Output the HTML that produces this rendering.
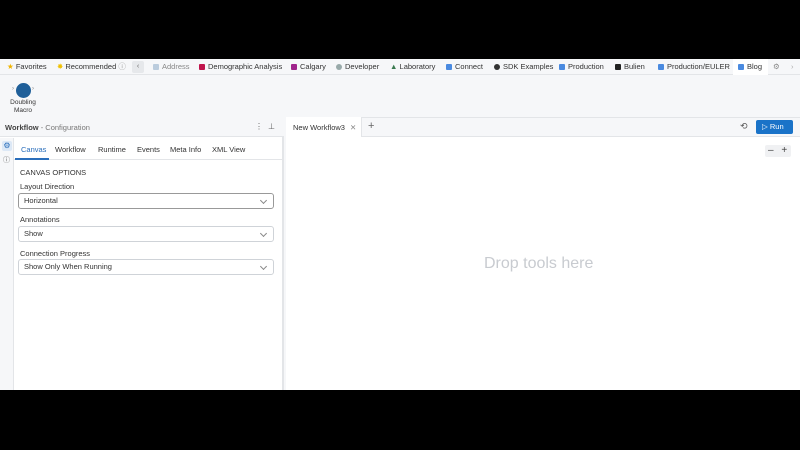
<!DOCTYPE html>
<html><head><style>
*{box-sizing:border-box;margin:0;padding:0}
body{width:800px;height:450px;background:#000;font-family:"Liberation Sans",sans-serif;font-size:8px;color:#333;position:relative;overflow:hidden}
.abs{position:absolute}
#app{position:absolute;left:0;top:59px;width:800px;height:331px;background:#f6f7f9}
.bm{position:absolute;top:0;height:16px;line-height:16px;font-size:7.5px;color:#333;white-space:nowrap}
.ic{display:inline-block;width:6px;height:6px;vertical-align:-1px;margin-right:3px;border-radius:1px}
.sel{position:absolute;left:18px;width:256px;height:16px;background:#fff;border:1px solid #cfd3d8;border-radius:3px;font-size:7.5px;line-height:14px;padding-left:5px}
.sel:after{content:"";position:absolute;right:7px;top:4px;width:4px;height:4px;border-right:1px solid #888;border-bottom:1px solid #888;transform:rotate(45deg)}
.lbl{position:absolute;left:20px;font-size:7.5px;color:#333}
</style></head><body>
<div id="app">
 <div class="abs" style="left:0;top:0;width:800px;height:16px;background:#f6f7f9;border-bottom:1px solid #e3e5e8"></div>
 <div class="bm" style="left:7px"><span style="color:#f0b400">★</span> Favorites</div>
 <div class="bm" style="left:57px"><span style="color:#f0c000">✸</span> Recommended <span style="color:#999">ⓘ</span></div>
 <div class="abs" style="left:132px;top:2px;width:12px;height:12px;background:#e6e8eb;border-radius:2px;font-size:7px;text-align:center;line-height:12px;color:#666">‹</div>
 <div class="bm" style="left:153px;color:#888"><span class="ic" style="background:#bcd"></span>Address</div>
 <div class="bm" style="left:199px"><span class="ic" style="background:#c0144c"></span>Demographic Analysis</div>
 <div class="bm" style="left:291px"><span class="ic" style="background:#a0248c"></span>Calgary</div>
 <div class="bm" style="left:336px"><span class="ic" style="background:#9aa;border-radius:50%"></span>Developer</div>
 <div class="bm" style="left:390px"><span style="color:#3a7a50">▲</span> Laboratory</div>
 <div class="bm" style="left:446px"><span class="ic" style="background:#4a8ae0"></span>Connect</div>
 <div class="bm" style="left:494px"><span class="ic" style="background:#333;border-radius:50%"></span>SDK Examples</div>
 <div class="bm" style="left:559px"><span class="ic" style="background:#4a8ae0"></span>Production</div>
 <div class="bm" style="left:615px"><span class="ic" style="background:#222"></span>Bulien</div>
 <div class="bm" style="left:658px"><span class="ic" style="background:#4a8ae0"></span>Production/EULER</div>
 <div class="abs" style="left:733px;top:0;width:35px;height:16px;background:#fff"></div>
 <div class="bm" style="left:738px"><span class="ic" style="background:#4a8ae0"></span>Blog</div>
 <div class="bm" style="left:773px;color:#888">⚙</div>
 <div class="bm" style="left:791px;color:#aaa">›</div>
 <div class="abs" style="left:16px;top:24px;width:15px;height:15px;border-radius:50%;background:#1f5f99"></div>
 <div class="abs" style="left:12px;top:27px;font-size:6px;color:#888">›</div>
 <div class="abs" style="left:32px;top:27px;font-size:6px;color:#888">›</div>
 <div class="abs" style="left:0;top:40px;width:46px;text-align:center;font-size:6.5px;line-height:8px;color:#333">Doubling<br>Macro</div>
 <div class="abs" style="left:0;top:58px;width:284px;height:273px;background:#fff;border-top:1px solid #e3e5e8;border-right:2px solid #e3e5e8"></div>
 <div class="abs" style="left:0;top:58px;width:284px;height:20px;background:#f6f7f9;border-bottom:1px solid #e3e5e8"></div>
 <div class="abs" style="left:5px;top:64px;font-size:7.5px"><b style="color:#444">Workflow</b> <span style="color:#777">- Configuration</span></div>
 <div class="abs" style="left:255px;top:63px;font-size:8px;color:#666">⋮</div>
 <div class="abs" style="left:268px;top:63px;font-size:8px;color:#666">⊥</div>
 <div class="abs" style="left:0;top:79px;width:14px;height:252px;background:#f6f7f9;border-right:1px solid #e3e5e8"></div>
 <div class="abs" style="left:2px;top:82px;width:10px;height:10px;background:#dce8f6;border-radius:2px;color:#2a6ebb;font-size:8px;text-align:center;line-height:10px">⚙</div>
 <div class="abs" style="left:3px;top:96px;font-size:7px;color:#666">ⓘ</div>
 <div class="abs" style="left:14px;top:79px;width:268px;height:22px;border-bottom:1px solid #e3e5e8"></div>
 <div class="abs" style="left:15px;top:99px;width:34px;height:2px;background:#2a6ebb"></div>
 <div class="abs" style="left:21px;top:86px;font-size:7.5px;color:#2a6ebb">Canvas</div>
 <div class="abs" style="left:55px;top:86px;font-size:7.5px">Workflow</div>
 <div class="abs" style="left:98px;top:86px;font-size:7.5px">Runtime</div>
 <div class="abs" style="left:137px;top:86px;font-size:7.5px">Events</div>
 <div class="abs" style="left:170px;top:86px;font-size:7.5px">Meta Info</div>
 <div class="abs" style="left:212px;top:86px;font-size:7.5px">XML View</div>
 <div class="lbl" style="top:109px">CANVAS OPTIONS</div>
 <div class="lbl" style="top:123px">Layout Direction</div>
 <div class="sel" style="top:134px;border-color:#999">Horizontal</div>
 <div class="lbl" style="top:156px">Annotations</div>
 <div class="sel" style="top:167px">Show</div>
 <div class="lbl" style="top:190px">Connection Progress</div>
 <div class="sel" style="top:200px">Show Only When Running</div>
 <div class="abs" style="left:286px;top:58px;width:514px;height:20px;background:#f6f7f9;border-top:1px solid #e3e5e8;border-bottom:1px solid #e3e5e8"></div>
 <div class="abs" style="left:286px;top:58px;width:76px;height:20px;background:#fff;border-right:1px solid #e3e5e8"></div>
 <div class="abs" style="left:293px;top:64px;font-size:7.5px">New Workflow3 <span style="color:#888;margin-left:3px">✕</span></div>
 <div class="abs" style="left:368px;top:62px;font-size:11px;line-height:11px;color:#666">+</div>
 <div class="abs" style="left:740px;top:62px;font-size:9px;color:#555">⟲</div>
 <div class="abs" style="left:756px;top:61px;width:37px;height:14px;background:#1a73c8;border-radius:2px;color:#fff;font-size:7.5px;line-height:14px;padding-left:6px">▷ Run</div>
 <div class="abs" style="left:286px;top:78px;width:514px;height:253px;background:#fff"></div>
 <div class="abs" style="left:765px;top:86px;width:26px;height:12px;background:#f0f1f3;border-radius:2px;font-size:10px;line-height:12px;color:#444;word-spacing:5px;padding-left:3px">– +</div>
 <div class="abs" style="left:484px;top:196px;font-size:16px;color:#c8cbd0">Drop tools here</div>
</div>
</body></html>
